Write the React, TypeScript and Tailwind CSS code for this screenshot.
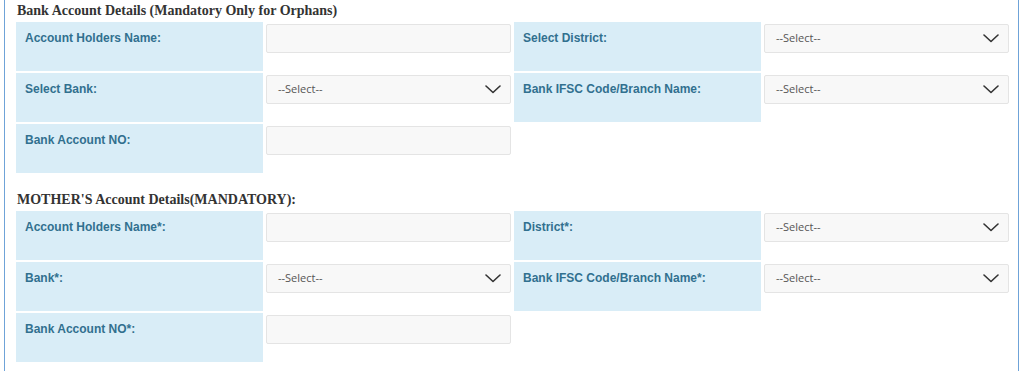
import React from "react";

type Field = {
  label: string;
  kind: "input" | "select";
};

type Row = Field[];

const bankRows: Row[] = [
  [
    { label: "Account Holders Name:", kind: "input" },
    { label: "Select District:", kind: "select" },
  ],
  [
    { label: "Select Bank:", kind: "select" },
    { label: "Bank IFSC Code/Branch Name:", kind: "select" },
  ],
  [{ label: "Bank Account NO:", kind: "input" }],
];

const motherRows: Row[] = [
  [
    { label: "Account Holders Name*:", kind: "input" },
    { label: "District*:", kind: "select" },
  ],
  [
    { label: "Bank*:", kind: "select" },
    { label: "Bank IFSC Code/Branch Name*:", kind: "select" },
  ],
  [{ label: "Bank Account NO*:", kind: "input" }],
];

const Chevron = () => (
  <svg width="16" height="9" viewBox="0 0 16 9" fill="none">
    <polyline
      points="1,1 8,7.5 15,1"
      stroke="#333"
      strokeWidth="1.6"
      strokeLinecap="round"
      strokeLinejoin="round"
    />
  </svg>
);

const Control: React.FC<{ kind: Field["kind"] }> = ({ kind }) => {
  if (kind === "select") {
    return (
      <div className="mx-px mt-[2px] h-[29px] flex items-center justify-between pl-[11px] pr-[9px] bg-[#f8f8f8] border border-[#e4e4e4] rounded-[2px]">
        <span className="text-[11px] text-[#555] font-['Open_Sans',sans-serif]">
          --Select--
        </span>
        <Chevron />
      </div>
    );
  }
  return (
    <div className="mx-px mt-[2px] h-[29px] bg-[#f8f8f8] border border-[#e4e4e4] rounded-[2px]" />
  );
};

const Label: React.FC<{ text: string }> = ({ text }) => (
  <div className="h-[49px] bg-[#d9edf7] pl-[9px] pt-[8px] text-[12px] leading-[17px] font-bold text-[#31708f] font-['Liberation_Sans',Arial,sans-serif]">
    {text}
  </div>
);

const Section: React.FC<{ title: string; rows: Row[] }> = ({ title, rows }) => (
  <div>
    <h3 className="pl-[1px] text-[14px] leading-[18px] font-bold text-[#333] font-['Liberation_Serif','Times_New_Roman',serif]">
      {title}
    </h3>
    <div className="mt-[2px] grid grid-cols-[247px_247px_247px_247px] gap-[2px]">
      {rows.map((row, i) => (
        <React.Fragment key={i}>
          {row.map((f) => (
            <React.Fragment key={f.label}>
              <Label text={f.label} />
              <div className="h-[49px]">
                <Control kind={f.kind} />
              </div>
            </React.Fragment>
          ))}
          {row.length === 1 && <div className="col-span-2" />}
        </React.Fragment>
      ))}
    </div>
  </div>
);

export default function App() {
  return (
    <div className="w-[1024px] h-[371px] bg-white overflow-hidden">
      <div className="ml-[4px] w-[1015px] h-full border-x border-[#6fa3d8] pl-[11px] pt-[2px]">
        <Section
          title="Bank Account Details (Mandatory Only for Orphans)"
          rows={bankRows}
        />
        <div className="mt-[18px]">
          <Section
            title="MOTHER'S Account Details(MANDATORY):"
            rows={motherRows}
          />
        </div>
      </div>
    </div>
  );
}
